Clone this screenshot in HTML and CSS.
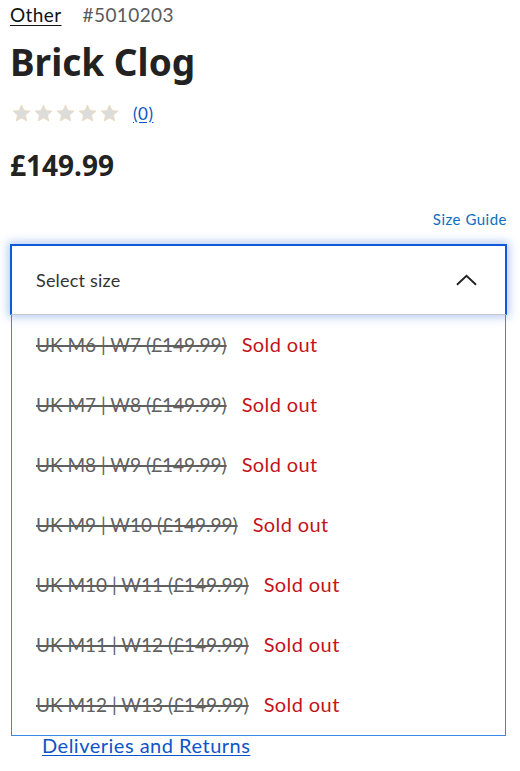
FILE: index.html
```html
<!DOCTYPE html>
<html lang="en">
<head>
<meta charset="utf-8">
<title>Brick Clog</title>
<link rel="stylesheet" href="styles.css">
</head>
<body>
<div class="page">
  <div class="crumbs">
    <a class="cat" href="#">Other</a>
    <span class="sku">#5010203</span>
  </div>
  <h1 class="title">Brick Clog</h1>
  <div class="rating">
    <div class="stars">
      <svg class="star" viewBox="0 0 24 24"><path d="M12 2.2l2.9 6.3 6.9.7-5.2 4.6 1.5 6.8L12 17.1l-6.1 3.5 1.5-6.8-5.2-4.6 6.9-.7z"/></svg>
      <svg class="star" viewBox="0 0 24 24"><path d="M12 2.2l2.9 6.3 6.9.7-5.2 4.6 1.5 6.8L12 17.1l-6.1 3.5 1.5-6.8-5.2-4.6 6.9-.7z"/></svg>
      <svg class="star" viewBox="0 0 24 24"><path d="M12 2.2l2.9 6.3 6.9.7-5.2 4.6 1.5 6.8L12 17.1l-6.1 3.5 1.5-6.8-5.2-4.6 6.9-.7z"/></svg>
      <svg class="star" viewBox="0 0 24 24"><path d="M12 2.2l2.9 6.3 6.9.7-5.2 4.6 1.5 6.8L12 17.1l-6.1 3.5 1.5-6.8-5.2-4.6 6.9-.7z"/></svg>
      <svg class="star" viewBox="0 0 24 24"><path d="M12 2.2l2.9 6.3 6.9.7-5.2 4.6 1.5 6.8L12 17.1l-6.1 3.5 1.5-6.8-5.2-4.6 6.9-.7z"/></svg>
    </div>
    <a class="count" href="#">(0)</a>
  </div>
  <div class="price">£149.99</div>
  <div class="guide-row"><a class="guide" href="#">Size Guide</a></div>
  <div class="select">
    <div class="select-head">
      <span>Select size</span>
      <svg class="chev" viewBox="0 0 22 12"><path d="M1 11L11 1.5 21 11"/></svg>
    </div>
    <ul class="options">
      <li><s>UK M6 | W7 (£149.99)</s><span class="sold">Sold out</span></li>
      <li><s>UK M7 | W8 (£149.99)</s><span class="sold">Sold out</span></li>
      <li><s>UK M8 | W9 (£149.99)</s><span class="sold">Sold out</span></li>
      <li><s>UK M9 | W10 (£149.99)</s><span class="sold">Sold out</span></li>
      <li><s>UK M10 | W11 (£149.99)</s><span class="sold">Sold out</span></li>
      <li><s>UK M11 | W12 (£149.99)</s><span class="sold">Sold out</span></li>
      <li><s>UK M12 | W13 (£149.99)</s><span class="sold">Sold out</span></li>
    </ul>
  </div>
  <a class="deliv" href="#">Deliveries and Returns</a>
</div>
</body>
</html>
```
FILE: styles.css
```css
html, body {
  margin: 0;
  padding: 0;
  background: #fff;
}
body {
  font-family: Lato, "Noto Sans", sans-serif;
  color: #222;
}
.page {
  padding: 0 13px 0 10px;
  display: flex;
  flex-direction: column;
}
.crumbs {
  display: flex;
  align-items: baseline;
  gap: 21px;
  font-size: 19px;
  line-height: 30px;
  letter-spacing: 0.4px;
}
.cat {
  color: #111;
  text-decoration: underline;
  text-underline-offset: 3px;
}
.sku {
  color: #5a5a5a;
}
.title {
  margin: 9px 0 0;
  font-family: "Noto Sans", sans-serif;
  font-weight: 700;
  font-size: 37px;
  line-height: 46px;
  color: #222;
}
.rating {
  display: flex;
  align-items: center;
  margin-top: 14px;
  height: 28px;
}
.stars {
  display: flex;
  gap: 1px;
  margin-left: 1px;
}
.star {
  width: 21px;
  height: 21px;
  fill: #dcdcdc;
  stroke: #efd9b4;
  stroke-width: 0.8;
}
.count {
  margin-left: 13px;
  color: #0b55c8;
  font-size: 17px;
  letter-spacing: 0.5px;
  text-underline-offset: 2px;
}
.price {
  margin-top: 20px;
  font-family: "Noto Sans", sans-serif;
  font-weight: 700;
  font-size: 28px;
  line-height: 36px;
  color: #222;
}
.guide-row {
  display: flex;
  justify-content: flex-end;
  margin-top: 26px;
}
.guide {
  color: #0d6ec2;
  font-size: 15px;
  line-height: 20px;
  text-decoration: none;
  letter-spacing: 0.5px;
}
.select {
  margin-top: 15px;
}
.select-head {
  height: 68px;
  display: flex;
  align-items: center;
  justify-content: space-between;
  padding: 0 28px 0 24px;
  border: 2px solid #0d5bd8;
  border-bottom: 1px solid #c8c8c8;
  box-shadow: 0 0 9px 2px rgba(40, 100, 220, 0.35);
  font-size: 18px;
  color: #333;
  letter-spacing: 0.2px;
}
.chev {
  width: 21px;
  height: 12px;
  fill: none;
  stroke: #222;
  stroke-width: 2;
}
.options {
  list-style: none;
  margin: 0 1px;
  padding: 0;
  border: 1px solid #3a87e4;
  border-top: none;
}
.options li {
  height: 60px;
  display: flex;
  align-items: center;
  gap: 15px;
  padding-left: 24px;
  padding-bottom: 2px;
  box-sizing: border-box;
  font-size: 19px;
}
.options s {
  color: #606060;
  text-decoration-thickness: 1.5px;
}
.sold {
  color: #c4121a;
  font-size: 20px;
  letter-spacing: 0.4px;
}
.deliv {
  align-self: flex-start;
  margin: -2px 0 0 32px;
  color: #0b55c8;
  font-size: 20px;
  line-height: 22px;
  letter-spacing: 0.5px;
  text-underline-offset: 2px;
}
```
